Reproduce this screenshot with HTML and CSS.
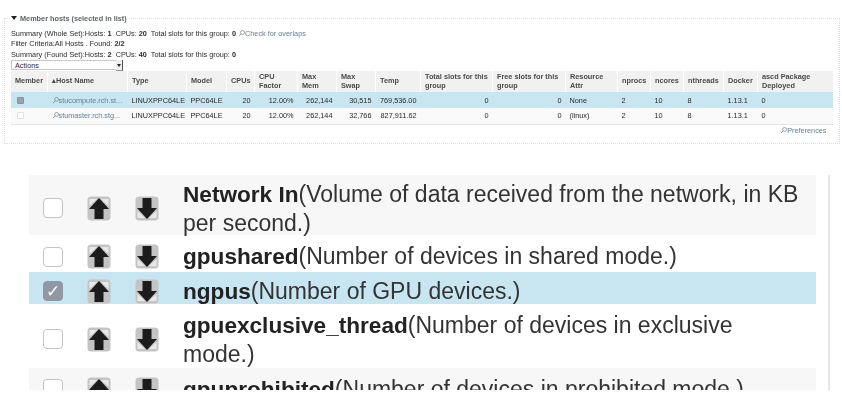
FILE: index.html
```html
<!DOCTYPE html>
<html>
<head>
    <title>Member hosts</title>
    <link rel="stylesheet" href="styles.css">
</head>
<body>

    <svg class="defs" width="0" height="0">
        <symbol id="up" viewBox="0 0 24 25">
            <rect x="0.5" y="0.5" width="23" height="24" rx="3.5" fill="#c4c4c4"/>
            <path d="M2.5 3 H10 L2.5 10 Z M21.5 3 H14 L21.5 10 Z" fill="#e9e9e9"/>
            <path d="M12 2 L22 13 H16.5 V23 H7.5 V13 H2 Z" fill="#1c1c1c"/>
        </symbol>
        <symbol id="down" viewBox="0 0 24 25">
            <rect x="0.5" y="0.5" width="23" height="24" rx="3.5" fill="#c4c4c4"/>
            <path d="M2.5 22 H10 L2.5 15 Z M21.5 22 H14 L21.5 15 Z" fill="#e9e9e9"/>
            <path d="M12 23 L22 12 H16.5 V2 H7.5 V12 H2 Z" fill="#1c1c1c"/>
        </symbol>
        <symbol id="link" viewBox="0 0 8 8">
            <circle cx="5.2" cy="2.8" r="2.2" fill="none" stroke="#8a8a8a" stroke-width="0.9"/>
            <path d="M3.6 4.4 L1 7" stroke="#8a8a8a" stroke-width="1"/>
        </symbol>
    </svg>

    <fieldset class="hosts">
        <legend><span class="caret"></span>Member hosts (selected in list)</legend>

        <p class="line">Summary (Whole Set):Hosts: <b>1</b>&nbsp; CPUs: <b>20</b>&nbsp; Total slots for this group: <b>0</b> <a class="link"><svg class="link-icon"><use href="#link"/></svg>Check for overlaps</a></p>
        <p class="line">Filter Criteria:All Hosts . Found: <b>2/2</b></p>
        <p class="line">Summary (Found Set):Hosts: <b>2</b>&nbsp; CPUs: <b>40</b>&nbsp; Total slots for this group: <b>0</b></p>

        <div class="actions">Actions<span class="actions-btn"></span></div>

        <table>
            <colgroup>
                <col class="c37"><col class="c80"><col class="c59"><col class="c40"><col class="c28"><col class="c43"><col class="c39"><col class="c39"><col class="c45"><col class="c72"><col class="c73"><col class="c52"><col class="c33"><col class="c33"><col class="c40"><col class="c34"><col class="c75">
            </colgroup>
            <thead>
                <tr>
                    <th>Member</th>
                    <th>&#x25B4;Host Name</th>
                    <th>Type</th>
                    <th>Model</th>
                    <th>CPUs</th>
                    <th>CPU Factor</th>
                    <th>Max Mem</th>
                    <th>Max Swap</th>
                    <th>Temp</th>
                    <th>Total slots for this group</th>
                    <th>Free slots for this group</th>
                    <th>Resource Attr</th>
                    <th>nprocs</th>
                    <th>ncores</th>
                    <th>nthreads</th>
                    <th>Docker</th>
                    <th>ascd Package Deployed</th>
                </tr>
            </thead>
            <tbody>
                <tr class="selected">
                    <td><span class="mini-check on"></span></td>
                    <td><a class="link"><svg class="link-icon"><use href="#link"/></svg>stucompute.rch.st...</a></td>
                    <td>LINUXPPC64LE</td>
                    <td>PPC64LE</td>
                    <td class="num">20</td>
                    <td class="num">12.00%</td>
                    <td class="num">262,144</td>
                    <td class="num">30,515</td>
                    <td class="num">769,536.00</td>
                    <td class="num">0</td>
                    <td class="num">0</td>
                    <td>None</td>
                    <td>2</td>
                    <td>10</td>
                    <td>8</td>
                    <td>1.13.1</td>
                    <td>0</td>
                </tr>
                <tr>
                    <td><span class="mini-check"></span></td>
                    <td><a class="link"><svg class="link-icon"><use href="#link"/></svg>stumaster.rch.stg...</a></td>
                    <td>LINUXPPC64LE</td>
                    <td>PPC64LE</td>
                    <td class="num">20</td>
                    <td class="num">12.00%</td>
                    <td class="num">262,144</td>
                    <td class="num">32,766</td>
                    <td class="num">827,911.62</td>
                    <td class="num">0</td>
                    <td class="num">0</td>
                    <td>(linux)</td>
                    <td>2</td>
                    <td>10</td>
                    <td>8</td>
                    <td>1.13.1</td>
                    <td>0</td>
                </tr>
            </tbody>
        </table>

        <div class="prefs"><a class="link"><svg class="link-icon"><use href="#link"/></svg>Preferences</a></div>
    </fieldset>

    <div class="metrics">
        <ul class="metric-list">
            <li class="metric shaded">
                <span class="check"></span>
                <svg class="arrow"><use href="#up"/></svg>
                <svg class="arrow"><use href="#down"/></svg>
                <p class="metric-text"><b>Network In</b>(Volume of data received from the network, in KB per second.)</p>
            </li>
            <li class="metric">
                <span class="check"></span>
                <svg class="arrow"><use href="#up"/></svg>
                <svg class="arrow"><use href="#down"/></svg>
                <p class="metric-text"><b>gpushared</b>(Number of devices in shared mode.)</p>
            </li>
            <li class="metric picked">
                <span class="check on">&#x2713;</span>
                <svg class="arrow"><use href="#up"/></svg>
                <svg class="arrow"><use href="#down"/></svg>
                <p class="metric-text"><b>ngpus</b>(Number of GPU devices.)</p>
            </li>
            <li class="metric">
                <span class="check"></span>
                <svg class="arrow"><use href="#up"/></svg>
                <svg class="arrow"><use href="#down"/></svg>
                <p class="metric-text"><b>gpuexclusive_thread</b>(Number of devices in exclusive mode.)</p>
            </li>
            <li class="metric shaded">
                <span class="check"></span>
                <svg class="arrow"><use href="#up"/></svg>
                <svg class="arrow"><use href="#down"/></svg>
                <p class="metric-text"><b>gpuprohibited</b>(Number of devices in prohibited mode.)</p>
            </li>
        </ul>
    </div>

</body>
</html>
```

FILE: styles.css
```css
html, body {
    margin: 0;
    padding: 0;
    background-color: #fff;
    overflow: hidden;
}

body {
    font-family: "Liberation Sans", Arial, sans-serif;
    color: #2b2b2b;
}

.defs {
    display: block;
    height: 0;
}

/* top panel */
.hosts {
    margin: 14px 3px 0 4px;
    padding: 0 6px;
    height: 130px;
    box-sizing: border-box;
    border: 1px dotted #dcdcdc;
    font-size: 7.3px;
    filter: blur(0.45px);
}

.hosts legend {
    padding: 0 2px 0 0;
    margin-left: 0;
    font-weight: bold;
    font-size: 7.3px;
    color: #5a6570;
}

.caret {
    display: inline-block;
    width: 0;
    height: 0;
    margin-right: 3px;
    vertical-align: 1px;
    border-left: 3.5px solid transparent;
    border-right: 3.5px solid transparent;
    border-top: 4px solid #222;
}

.line {
    margin: 0;
    height: 10.4px;
    line-height: 10.4px;
}

.line:first-of-type {
    margin-top: 6px;
}

.link {
    color: #5f7f99;
}

.link-icon {
    width: 7px;
    height: 7px;
    vertical-align: -1px;
}

.actions {
    position: relative;
    width: 112px;
    height: 10px;
    padding-left: 3px;
    box-sizing: border-box;
    line-height: 9px;
    border: 1px solid #c8c8c8;
    border-width: 1px 0 1px 1px;
    background-color: #fff;
}

.actions-btn {
    position: absolute;
    right: 0;
    top: -1px;
    width: 6px;
    height: 10px;
    background-color: #eee;
    border-right: 1px solid #555;
    border-bottom: 1px solid #999;
}

.actions-btn::after {
    content: "";
    position: absolute;
    left: 1px;
    top: 4px;
    border-left: 2px solid transparent;
    border-right: 2px solid transparent;
    border-top: 3px solid #222;
}

table {
    width: 822px;
    border-collapse: collapse;
    table-layout: fixed;
    margin: 1px 0 0 -1px;
}

.c37 { width: 37px; }
.c80 { width: 80px; }
.c59 { width: 59px; }
.c40 { width: 40px; }
.c28 { width: 28px; }
.c43 { width: 43px; }
.c39 { width: 39px; }
.c45 { width: 45px; }
.c72 { width: 72px; }
.c73 { width: 73px; }
.c52 { width: 52px; }
.c33 { width: 33px; }
.c34 { width: 34px; }
.c75 { width: 75px; }

th {
    height: 21px;
    padding: 0 4px;
    box-sizing: border-box;
    background-color: #f1f1f1;
    border-left: 1px solid #fff;
    color: #4a4a4a;
    font-weight: bold;
    font-size: 7.3px;
    line-height: 8.5px;
    text-align: left;
}

td {
    height: 16px;
    padding: 0 4px;
    box-sizing: border-box;
    white-space: nowrap;
    overflow: hidden;
    border-bottom: 1px solid #e4e4e4;
    background-color: #f9f9f9;
}

.selected td {
    background-color: #c8e6f1;
    border-bottom: 0;
}

td.num {
    text-align: right;
}

.mini-check {
    display: inline-block;
    width: 5px;
    height: 5px;
    margin-left: 2px;
    vertical-align: -1px;
    border: 1px solid #e2e2e2;
    border-radius: 1px;
    background-color: #fff;
}

.mini-check.on {
    background-color: #9aa3ab;
    border-color: #8a939b;
}

.prefs {
    text-align: right;
    padding: 1px 6px 0 0;
}

/* bottom panel */
.metrics {
    margin: 31px 0 0 29px;
    width: 799px;
    height: 215px;
    border-right: 2px solid #e6e6e6;
    overflow: hidden;
    filter: blur(0.3px);
}

.metric-list {
    width: 787px;
    margin: 0;
    padding: 0;
    list-style: none;
}

.metric {
    display: flex;
    align-items: center;
    padding: 6px 0 0 14px;
    box-sizing: border-box;
}

.shaded {
    background-color: #f7f7f7;
}

.picked {
    background-color: #c8e6f1;
}

.check {
    flex: none;
    width: 20px;
    height: 20px;
    box-sizing: border-box;
    border: 1px solid #c4c4c4;
    border-radius: 4px;
    background-color: #fff;
    color: #fff;
    font-size: 17px;
    line-height: 19px;
    text-align: center;
}

.check.on {
    background-color: #8f98a3;
    border-color: #8f98a3;
}

.arrow {
    flex: none;
    width: 24px;
    height: 25px;
    margin-left: 24px;
}

.metric-text {
    margin: 0 0 0 24px;
    width: 620px;
    font-size: 23px;
    line-height: 28px;
    color: #333;
}

.metric-text b {
    font-size: 22.6px;
    color: #222;
}

.metric:nth-child(1) { height: 60px; }
.metric:nth-child(2) { height: 37px; }
.metric:nth-child(3) { height: 32px; }
.metric:nth-child(4) { height: 64px; }
.metric:nth-child(5) { height: 36px; }
```
